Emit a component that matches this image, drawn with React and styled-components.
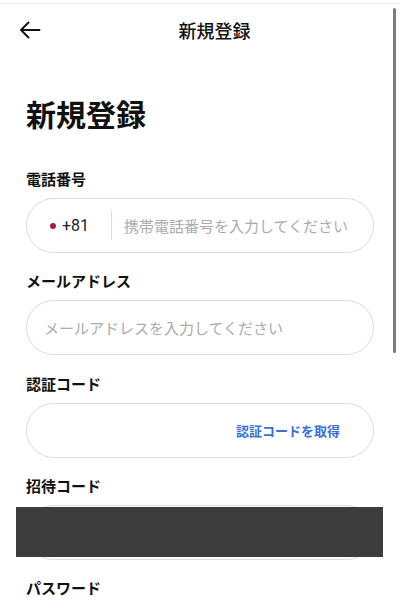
import React from 'react';
import styled, { createGlobalStyle } from 'styled-components';

const GlobalStyle = createGlobalStyle`
	html, body {
		margin: 0;
		padding: 0;
		background: #fff;
	}
	body {
		font-family: "Noto Sans CJK JP", "Noto Sans", sans-serif;
		color: #111;
	}
`;

const fields = [
	{ label: '電話番号', kind: 'phone', placeholder: '携帯電話番号を入力してください' },
	{ label: 'メールアドレス', kind: 'text', placeholder: 'メールアドレスを入力してください' },
	{ label: '認証コード', kind: 'code', action: '認証コードを取得' },
	{ label: '招待コード', kind: 'text', placeholder: '', masked: true },
	{ label: 'パスワード', kind: 'text', placeholder: 'パスワードを入力してください' },
];

const BackArrow = () => (
	<svg width="22" height="18" viewBox="0 0 22 18" fill="none">
		<path d="M20.5 9H2.5M9.5 1.5L2 9l7.5 7.5" stroke="#111" strokeWidth="1.9" strokeLinecap="round" strokeLinejoin="round" />
	</svg>
);

const Field = ({ field }) => (
	<Group>
		<Label>{field.label}</Label>
		<InputBox $tight={field.kind === 'phone'}>
			{field.kind === 'phone' && (
				<>
					<Country>
						<Dot />
						+81
					</Country>
					<Divider />
				</>
			)}
			<Input placeholder={field.placeholder} />
			{field.action && <Action>{field.action}</Action>}
		</InputBox>
		{field.masked && <Mask />}
	</Group>
);

const App = () => {
	return (
		<Page>
			<GlobalStyle />
			<Header>
				<BackButton>
					<BackArrow />
				</BackButton>
				<HeaderTitle>新規登録</HeaderTitle>
			</Header>
			<Content>
				<Title>新規登録</Title>
				<Form>
					{fields.map((f) => (
						<Field key={f.label} field={f} />
					))}
				</Form>
			</Content>
			<Scrollbar />
		</Page>
	);
};

const Page = styled.div`
	position: relative;
	width: 401px;
	height: 600px;
	overflow: hidden;
	padding-top: 3px;
	box-sizing: border-box;
	&::before {
		content: '';
		display: block;
		height: 1px;
		background: #ececec;
	}
`;

const Header = styled.header`
	display: grid;
	grid-template-columns: 60px 1fr 32px;
	align-items: center;
	height: 52px;
`;

const BackButton = styled.button`
	display: flex;
	align-items: center;
	padding: 0 0 0 19px;
	border: 0;
	background: none;
	height: 52px;
`;

const HeaderTitle = styled.h2`
	margin: 0;
	text-align: center;
	font-size: 18px;
	font-weight: 500;
	line-height: 52px;
`;

const Content = styled.main`
	padding: 0 27px 0 26px;
`;

const Title = styled.h1`
	margin: 39px 0 0;
	font-size: 30px;
	line-height: 36px;
	font-weight: 700;
`;

const Form = styled.div`
	display: flex;
	flex-direction: column;
	gap: 17.3px;
	margin-top: 37px;
`;

const Group = styled.div`
	position: relative;
	display: flex;
	flex-direction: column;
	gap: 8px;
`;

const Label = styled.label`
	font-size: 15px;
	line-height: 22px;
	font-weight: 700;
`;

const InputBox = styled.div`
	display: flex;
	align-items: center;
	height: 55px;
	box-sizing: border-box;
	border: 1px solid #dcdcdc;
	border-radius: 28px;
	padding: 0 ${(p) => (p.$tight ? '12px' : '33px')} 0 17px;
`;

const Country = styled.div`
	display: flex;
	align-items: center;
	gap: 6px;
	padding-left: 6px;
	font-family: "Roboto", "Noto Sans", sans-serif;
	font-size: 16px;
	color: #222;
	width: 61px;
`;

const Dot = styled.span`
	width: 6px;
	height: 6px;
	border-radius: 50%;
	background: #a5203b;
`;

const Divider = styled.span`
	width: 1px;
	height: 29px;
	background: #dcdcdc;
	margin-right: 12px;
`;

const Input = styled.input`
	flex: 1;
	min-width: 0;
	border: 0;
	outline: none;
	padding: 0;
	background: transparent;
	font-family: inherit;
	font-size: 15px;
	color: #222;
	&::placeholder {
		color: #ababab;
	}
`;

const Action = styled.span`
	font-size: 13px;
	font-weight: 700;
	color: #3b6fd6;
	white-space: nowrap;
`;

const Mask = styled.div`
	position: absolute;
	left: -10px;
	right: -9px;
	bottom: 3px;
	height: 50px;
	background: #3c3c3c;
`;

const Scrollbar = styled.div`
	position: absolute;
	top: 8px;
	right: 5px;
	width: 3px;
	height: 345px;
	border-radius: 2px;
	background: #7d7d7d;
`;

export default App;
